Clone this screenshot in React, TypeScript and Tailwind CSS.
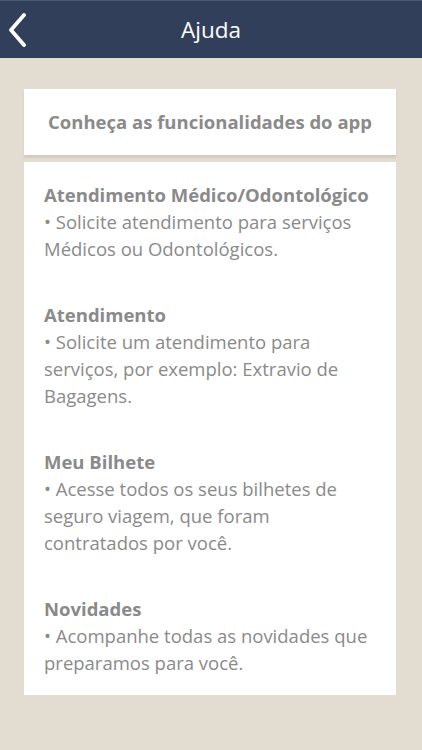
const sections = [
  {
    title: "Atendimento Médico/Odontológico",
    lines: ["• Solicite atendimento para serviços", "Médicos ou Odontológicos."],
  },
  {
    title: "Atendimento",
    lines: ["• Solicite um atendimento para", "serviços, por exemplo: Extravio de", "Bagagens."],
  },
  {
    title: "Meu Bilhete",
    lines: ["• Acesse todos os seus bilhetes de", "seguro viagem, que foram", "contratados por você."],
  },
  {
    title: "Novidades",
    lines: ["• Acompanhe todas as novidades que", "preparamos para você."],
  },
];

export default function App() {
  return (
    <div
      className="w-[422px] h-[750px] flex flex-col bg-[#e3ddd1] overflow-hidden"
      style={{ fontFamily: '"Open Sans", "Noto Sans", sans-serif' }}
    >
      {/* Header */}
      <div className="h-[58px] shrink-0 flex items-center relative bg-[#313f5a] border-t border-[#4a5873]">
        <button className="absolute left-[6px] top-[12px] w-[22px] h-[34px] flex items-center justify-center" aria-label="Voltar">
          <svg width="20" height="34" viewBox="0 0 20 34" fill="none">
            <path d="M17 2 L4 17 L17 32" stroke="white" strokeWidth="3.8" strokeLinecap="round" strokeLinejoin="round" />
          </svg>
        </button>
        <div className="flex-1 text-center text-white text-[22.5px] leading-none pt-[2px]">Ajuda</div>
      </div>

      <div className="pl-[24px] pr-[26px] pt-[31px]">
        {/* Intro card */}
        <div className="bg-white h-[66px] flex items-center justify-center shadow-[0_3px_2px_#d2ccbe]">
          <div className="text-[#8a8a8a] text-[18.5px] font-bold">Conheça as funcionalidades do app</div>
        </div>

        {/* Content card */}
        <div className="bg-white mt-[7px] pl-[20px] pr-[8px] pt-[19px] pb-[19px] flex flex-col gap-[39px]">
          {sections.map((s) => (
            <div key={s.title} className="text-[18.5px] leading-[27px] text-[#8a8a8a]">
              <div className="font-bold">{s.title}</div>
              {s.lines.map((l) => (
                <div key={l}>{l}</div>
              ))}
            </div>
          ))}
        </div>
      </div>
    </div>
  );
}
